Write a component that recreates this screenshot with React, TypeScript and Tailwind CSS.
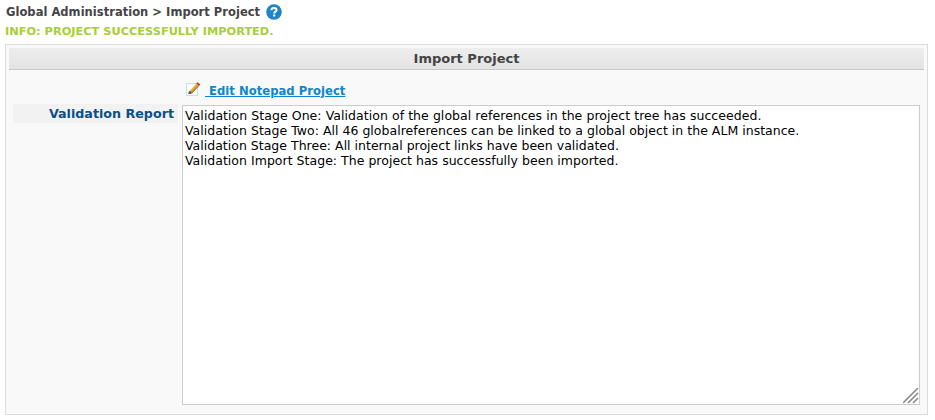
const reportLines = [
  { text: 'Validation Stage One: Validation of the global references in the project tree has succeeded.', spacing: 'tracking-[0.056px]' },
  { text: 'Validation Stage Two: All 46 globalreferences can be linked to a global object in the ALM instance.', spacing: 'tracking-[0.022px]' },
  { text: 'Validation Stage Three: All internal project links have been validated.', spacing: 'tracking-[0.012px]' },
  { text: 'Validation Import Stage: The project has successfully been imported.', spacing: 'tracking-[0.025px]' },
];

function HelpIcon() {
  return (
    <svg width="16" height="16" viewBox="0 0 16 16" className="shrink-0" aria-label="Help">
      <circle cx="8" cy="8" r="7.8" fill="#1e83c8" />
      <path d="M5.4 6.2C5.5 4.5 6.5 3.9 8 3.9c1.6 0 2.6.8 2.6 2.1 0 1.8-2.4 1.6-2.4 3.4" fill="none" stroke="#fff" strokeWidth="2" />
      <rect x="7.1" y="10.5" width="2.2" height="2" fill="#fff" />
    </svg>
  );
}

function EditIcon() {
  return (
    <svg width="16" height="16" viewBox="0 0 16 16" className="shrink-0" aria-hidden="true">
      <rect x="0.5" y="1.5" width="11" height="12" fill="#fdfeff" stroke="#c3e0f2" />
      <path d="M4 8.7 10.4 1.5 13 3.7 6.2 10.9Z" fill="#dca126" />
      <path d="M4.6 9 11.1 1.9" stroke="#efbf4c" strokeWidth="1" />
      <path d="M5.8 11 13 3.5" stroke="#8d6326" strokeWidth="0.9" />
      <path d="M10.4 1.4 11.5.2 14.3 2.5 13.1 3.8Z" fill="#c32d27" />
      <path d="M2.2 12 2.8 9.8 4 8.7 6.2 10.9 4.8 12Z" fill="#6a5141" />
    </svg>
  );
}

function ResizeGrip() {
  return (
    <svg width="16" height="16" viewBox="0 0 16 16" className="absolute right-0 bottom-0" aria-hidden="true">
      <path d="M.5 14.5 14.5.5M5.5 14.5l9-9M10.5 14.5l4-4" stroke="#858585" strokeWidth="1.5" strokeLinecap="square" />
    </svg>
  );
}

export default function App() {
  return (
    <main className="h-[420px] w-[935px] overflow-hidden bg-white pt-1 font-['DejaVu_Sans',sans-serif] text-[11px] leading-4 text-[#444]">
      <div className="flex h-4 items-center gap-[6px] pl-[6px] whitespace-nowrap">
        <h1 className="text-[11.5px] font-bold tracking-[0.03px]">Global Administration &gt; Import Project</h1>
        <HelpIcon />
      </div>
      <p className="mt-[3px] h-[17px] pl-[5px] text-[11.35px] leading-[17px] font-bold whitespace-nowrap text-[#a6ce39]">INFO: PROJECT SUCCESSFULLY IMPORTED.</p>
      <section className="mt-1 ml-[5px] h-[371px] w-[923px] border border-[#dcdcdc] bg-[#f9f9f9] p-[3px]">
        <h2 className="h-[22px] border-b border-[#c8c8c8] bg-linear-to-b from-[#eee] to-[#e3e3e3] text-center text-[13px] leading-[21px] font-bold">
          Import Project
        </h2>
        <div className="mt-[11px] flex h-[18px] items-center gap-[3px] pl-[177px]">
          <EditIcon />
          <a className="pt-px text-[11.6px] font-bold tracking-[0.03px] whitespace-pre text-[#0d86ce] underline"> Edit Notepad Project</a>
        </div>
        <div className="mt-[5px] flex items-start gap-1 pl-1">
          <div className="h-[19px] w-[165px] bg-[#f2f2f2] pr-1 text-right text-[12.7px] leading-[19px] font-bold whitespace-nowrap text-[#0a4f88]">
            Validation Report
          </div>
          <div className="relative mt-px h-[300px] w-[738px] border border-[#ccc] bg-white px-[2px] pt-[2px] text-[12.5px] leading-[15px] text-black">
            {reportLines.map((line) => (
              <p key={line.text} className={`whitespace-nowrap ${line.spacing}`}>{line.text}</p>
            ))}
            <ResizeGrip />
          </div>
        </div>
      </section>
    </main>
  );
}
